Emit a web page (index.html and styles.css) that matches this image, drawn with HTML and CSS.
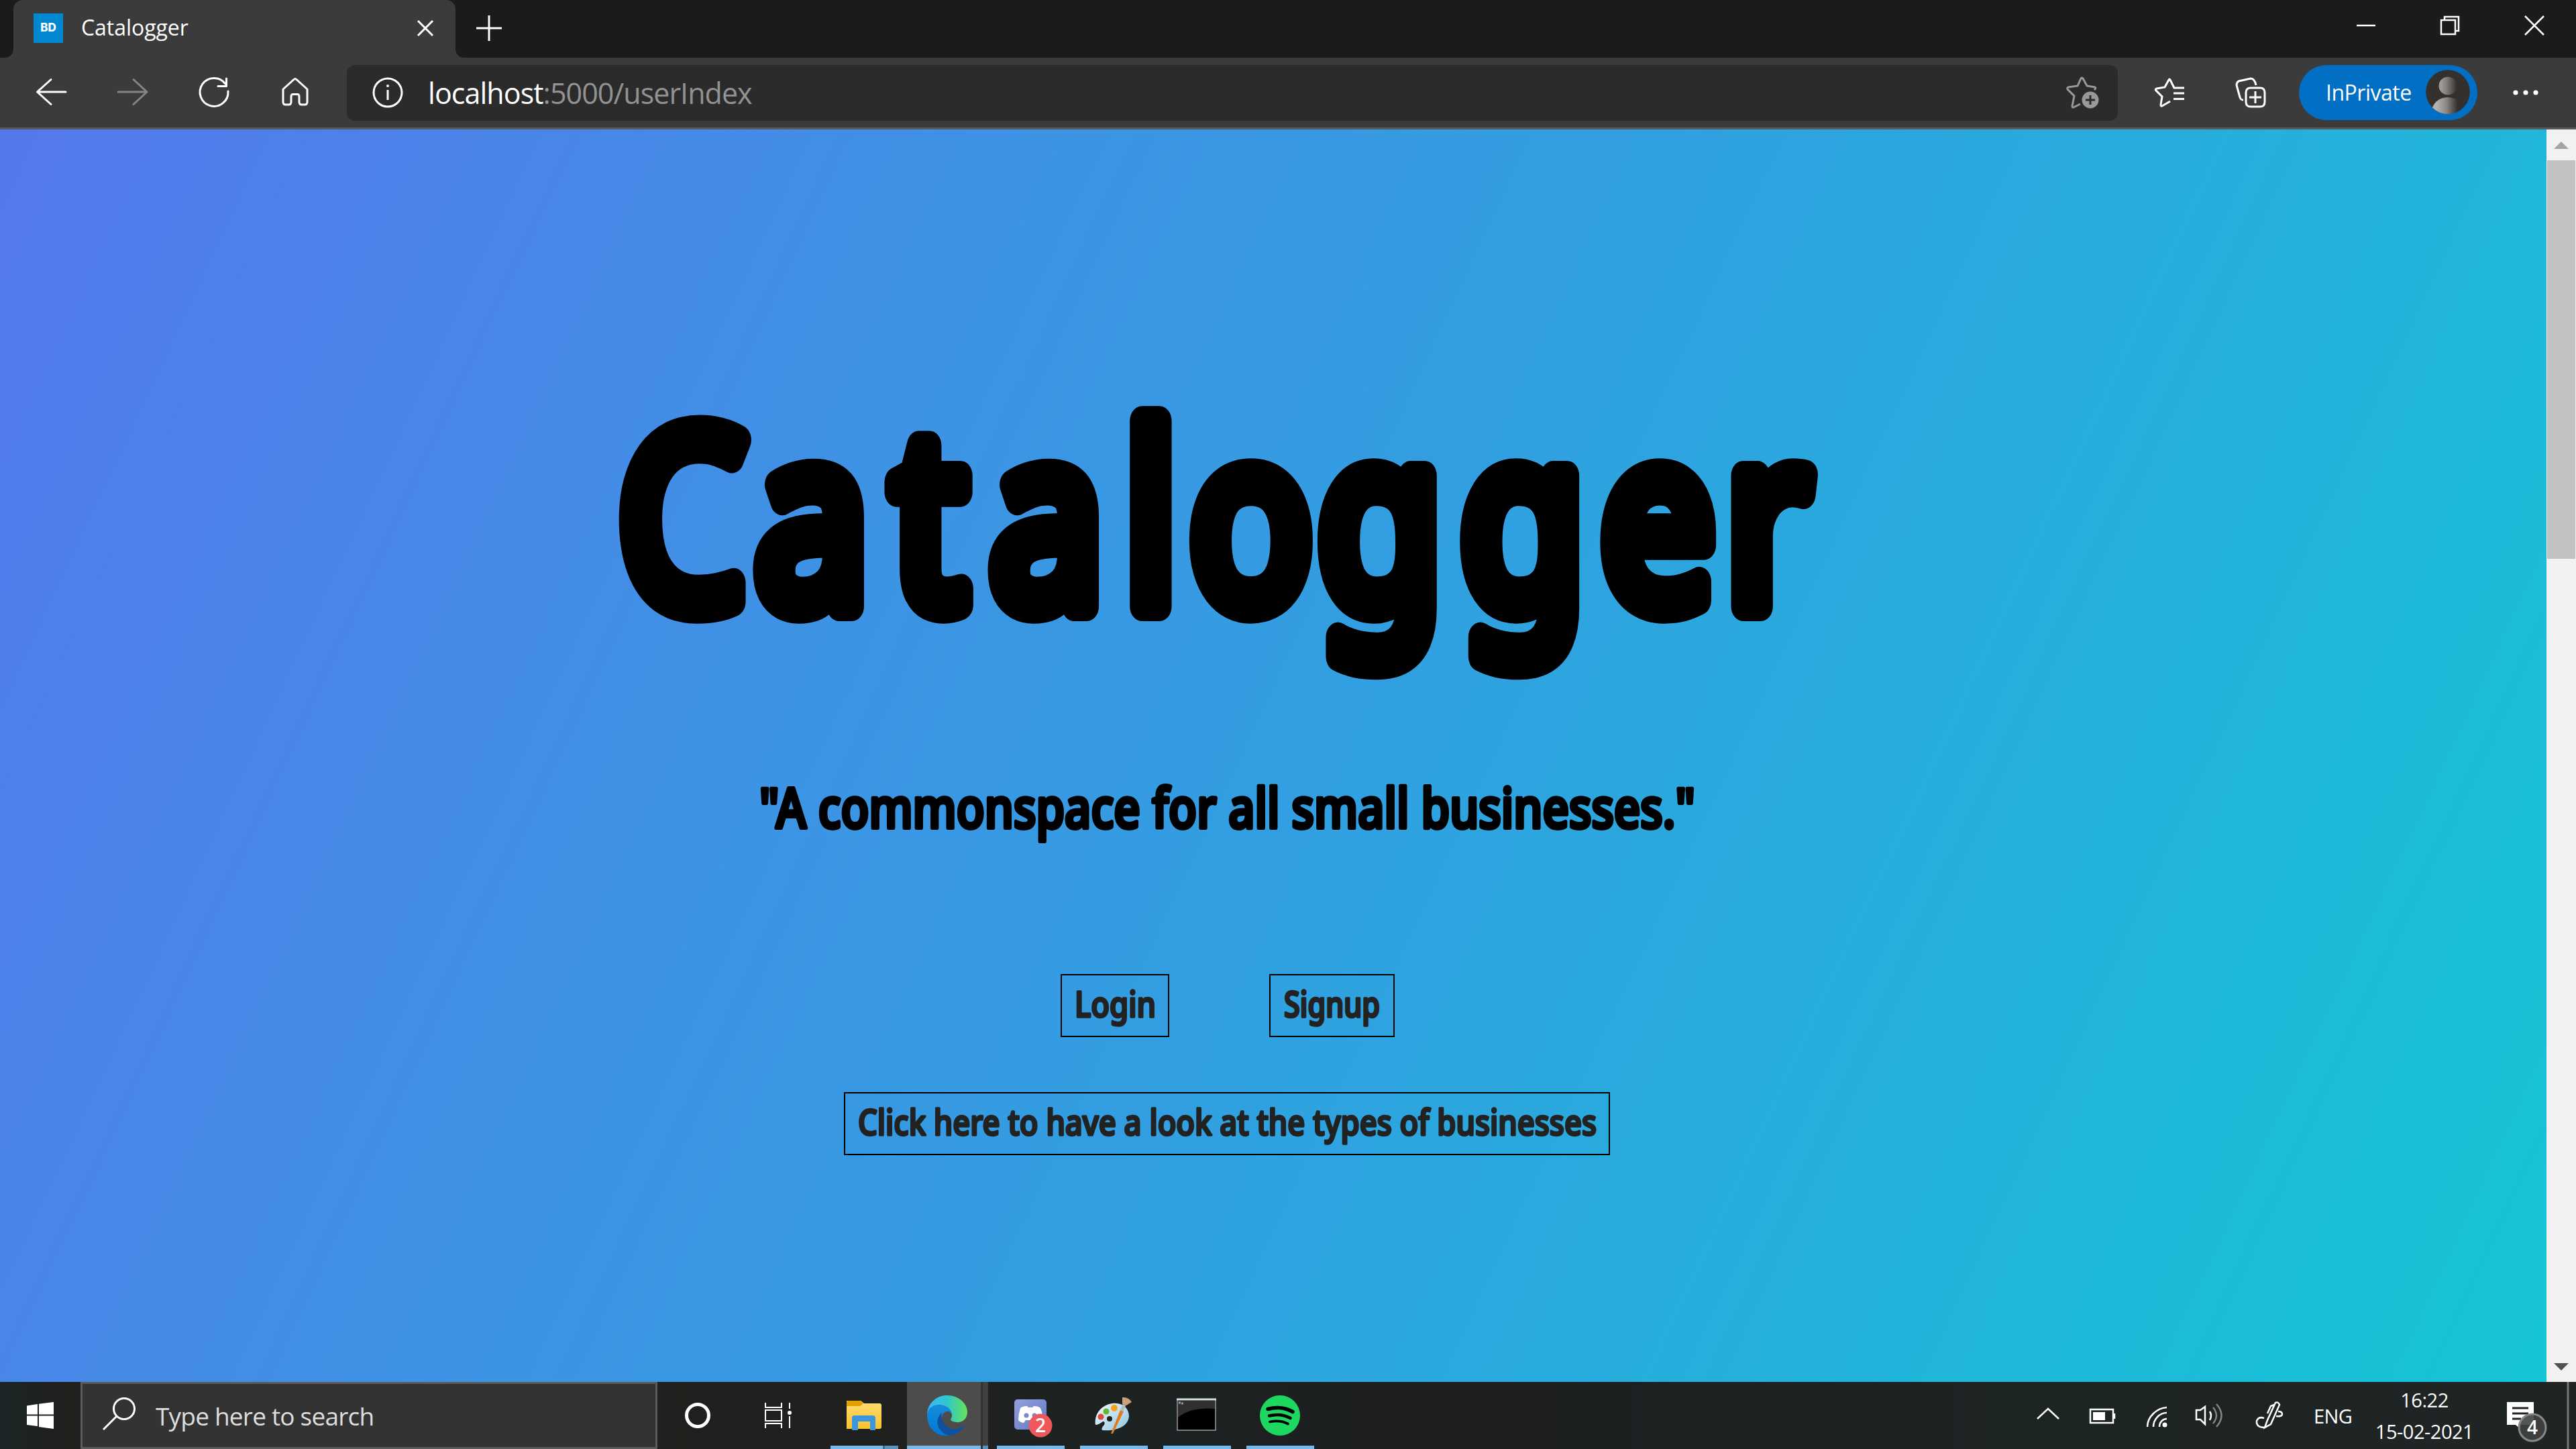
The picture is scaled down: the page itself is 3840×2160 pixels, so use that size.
FILE: index.html
```html
<!DOCTYPE html>
<html lang="en"><head><meta charset="utf-8"><title>Catalogger</title><link rel="stylesheet" href="styles.css"></head>
<body>
<div class="tabstrip">
  <div class="tab">
    <span class="favicon">BD</span>
    <span class="tabname">Catalogger</span>
    <svg class="tabclose" viewBox="0 0 24 24"><path d="M1 1 23 23M23 1 1 23"/></svg>
  </div>
  <svg class="newtab" viewBox="0 0 40 40"><path d="M20 1V39M1 20H39"/></svg>
  <svg class="winbtns" viewBox="0 0 280 28"><path d="M0 14H28M126 6h21v21h-21zM131 6V1h21v21h-5M251 0l28 28M279 0l-28 28"/></svg>
</div>
<div class="toolbar">
  <svg class="nav" viewBox="0 86 500 104">
    <path d="M98 137H56M76 118.500 55.500 137 76 155.500"/>
    <path class="dim" d="M176 137H218M199 118.500 219 137 199 155.500"/>
    <path d="M340 136A21 21 0 1 1 336 125M337.500 117V128.500H325"/>
    <path d="M422 133 438 118.500Q440 116.500 442 118.500L458 133V152Q458 156 454 156H450Q446 156 446 152V144Q446 140.500 443 140.500H437Q434 140.500 434 144V152Q434 156 430 156H426Q422 156 422 152Z"/>
  </svg>
  <div class="address">
    <svg class="info" viewBox="0 0 48 48"><circle cx="24" cy="24" r="21"/><path d="M24 20V35"/><circle class="dot" cx="24" cy="14" r="2"/></svg>
    <div class="url">localhost<span>:5000/userIndex</span></div>
    <svg class="addfav" viewBox="0 0 50 50"><path d="M21 42 11 47Q9 48 9 45L12 30 2 20Q1 18 3 17L17 15 22 4Q23 2 25 4L31 15 43 17Q45 18 42 21"/><circle cx="36" cy="36" r="12.500"/><path class="plus" d="M36 29V43M29 36H43"/></svg>
  </div>
  <svg class="tools" viewBox="3206 90 180 96">
    <path d="M3256 131H3241L3235 119Q3234 117 3233 119L3227 130 3215 132Q3212 133 3214 135L3223 144 3221 156Q3221 159 3223 158L3235 151M3240 139H3256M3240 147.500H3256"/>
    <path d="M3344 149Q3340 149 3339 145L3334 127Q3334 123 3337 121L3355 117Q3361 117 3363 127M3355 131H3369Q3376 131 3376 138V152Q3376 159 3369 159H3355Q3348 159 3348 152V138Q3348 131 3355 131M3362 136V154M3353 145H3371"/>
  </svg>
  <div class="profile"><span>InPrivate</span>
    <svg viewBox="0 0 66 66"><defs><linearGradient id="person"><stop offset=".15" stop-color="#b5b1ac"/><stop offset=".45" stop-color="#8c8884"/><stop offset=".8" stop-color="#33302d"/></linearGradient><linearGradient id="head"><stop offset=".1" stop-color="#a09c98"/><stop offset=".4" stop-color="#85817d"/><stop offset="1" stop-color="#33302d"/></linearGradient><clipPath id="round"><circle cx="33" cy="33" r="33"/></clipPath></defs><g clip-path="url(#round)"><circle cx="33" cy="33" r="33" fill="#33302d"/><circle cx="33" cy="24" r="13.500" fill="url(#head)"/><ellipse cx="33" cy="62" rx="24" ry="21" fill="url(#person)"/></g></svg>
  </div>
  <svg class="more" viewBox="0 0 40 10"><circle cx="5" cy="5" r="3.600"/><circle cx="20" cy="5" r="3.600"/><circle cx="35" cy="5" r="3.600"/></svg>
</div>
<div class="viewport">
  <main class="page">
    <h1><svg viewBox="900 560 1860 510"><g class="display title" transform="scale(.82 1)"><text y="904" font-size="364" stroke-width="44" x="1125 1374 1624 1801 2045 2164 2397 2656 2911 3138">Catalogger</text></g></svg></h1>
    <h2><svg viewBox="1100 1150 1460 120"><text class="display" x="1132" y="1234" font-size="81" stroke-width="6" textLength="1395" lengthAdjust="spacingAndGlyphs">"A commonspace for all small businesses."</text></svg></h2>
    <div class="actions">
      <a class="btn login"><svg viewBox="0 0 118 90"><text class="display" x="-1" y="62" font-size="53" stroke-width="3.500" textLength="121" lengthAdjust="spacingAndGlyphs">Login</text></svg></a>
      <a class="btn signup"><svg viewBox="0 0 143 90"><text class="display" x="0" y="62" font-size="53" stroke-width="3.500" textLength="143" lengthAdjust="spacingAndGlyphs">Signup</text></svg></a>
    </div>
    <a class="btn browse"><svg viewBox="0 0 1098 90"><text class="display" x="-1" y="62" font-size="53" stroke-width="3.500" textLength="1101" lengthAdjust="spacingAndGlyphs">Click here to have a look at the types of businesses</text></svg></a>
  </main>
  <div class="scrollbar"><i class="up"></i><div class="thumb"></div><i class="down"></i></div>
</div>
<footer class="taskbar">
  <svg class="start" viewBox="0 0 40 40"><path d="M0 5.500 16 3V18.500H0ZM18 2.700 40 0V18.500H18ZM0 20.500H16V36L0 34ZM18 20.500H40V40L18 37Z"/></svg>
  <div class="search"><svg viewBox="0 0 50 50"><circle cx="33" cy="17" r="15.500"/><path d="M22 28 2 48"/></svg><span>Type here to search</span></div>
  <svg class="apps" viewBox="1000 2060 1000 100">
    <defs>
      <linearGradient id="folder" x2="0" y2="1"><stop stop-color="#ffdc73"/><stop offset="1" stop-color="#fbc229"/></linearGradient>
      <linearGradient id="edgeTop"><stop stop-color="#3bb8ff"/><stop offset=".5" stop-color="#2fc7cb"/><stop offset="1" stop-color="#68e25a"/></linearGradient>
      <linearGradient id="edgeLeft" x2="0" y2="1"><stop stop-color="#168cd8"/><stop offset="1" stop-color="#0078d9"/></linearGradient>
      <linearGradient id="palette" x2="1" y2="1"><stop stop-color="#f2f8fb"/><stop offset="1" stop-color="#8fc5e0"/></linearGradient>
      <linearGradient id="discord" x2="1" y2="1"><stop stop-color="#93a1dc"/><stop offset="1" stop-color="#6277c4"/></linearGradient>
    </defs>
    <circle cx="1040" cy="2110" r="16.500" fill="none" stroke="#fff" stroke-width="5"/>
    <path d="M1141 2091V2098H1165V2091M1141 2129V2122H1165V2129M1141 2102H1165V2118H1141ZM1177 2091V2100M1177 2111V2129" fill="none" stroke="#fff" stroke-width="2"/><circle cx="1177" cy="2106" r="3"/>
    <path d="M1262 2088H1283L1288 2092H1311Q1314 2092 1314 2095V2127Q1314 2130 1311 2130H1262Z" fill="url(#folder)"/><path d="M1262 2090Q1262 2088 1265 2088H1282L1287 2092 1282 2096H1262Z" fill="#e2a000"/><path d="M1270 2132V2114Q1270 2110 1274 2110H1301Q1305 2110 1305 2114V2132H1297V2119H1279V2132Z" fill="#3a96dd"/>
    <rect x="1352" y="2060" width="110" height="95" fill="#4d4c4b"/><rect x="1462" y="2060" width="3" height="100" fill="#343332"/><rect x="1465" y="2060" width="8" height="95" fill="#414040"/>
    <g transform="translate(1382 2080)"><path d="M30 0C47 0 60 12 60 25C60 36 52 41 43 40C36 39 34 37 36 34C39 29 36 22 28 23C20 14 6 17 0 27C2 10 15 0 30 0Z" fill="url(#edgeTop)"/><path d="M0 30C0 20 8 14 18 14C29 14 37 21 37 29C35 23 29 22 24 27C19 38 23 52 34 60C13 63 0 47 0 30Z" fill="url(#edgeLeft)"/><path d="M22 26C19 40 32 52 44 50C48 49 51 47 54 45Q56 44 55 46C50 55 42 60 32 60C12 53 12 34 22 26Z" fill="#0f519f"/></g>
    <rect x="1512" y="2086" width="48" height="45" rx="5" fill="url(#discord)"/><path d="M1521 2099Q1525 2096 1531 2096L1533 2098H1539L1541 2096Q1548 2096 1551 2099Q1555 2109 1555 2118Q1551 2121 1546 2121L1543 2117H1529L1526 2121Q1520 2120 1518 2117Q1518 2108 1521 2099Z" fill="#fff"/><circle cx="1530" cy="2110" r="3.500" fill="#7788d0"/><circle cx="1542" cy="2110" r="3.500" fill="#7788d0"/><circle cx="1551" cy="2125" r="17.500" fill="#f0575b"/><text x="1551" y="2135" font-size="28" text-anchor="middle">2</text>
    <path d="M1633 2124C1631 2109 1640 2095 1658 2092C1673 2090 1683 2099 1683 2111C1682 2126 1665 2134 1643 2132Q1641 2129 1646 2124Q1648 2119 1644 2119Q1638 2124 1633 2124Z" fill="url(#palette)"/><circle cx="1654" cy="2115" r="4" fill="#222"/><circle cx="1641" cy="2112" r="4.500" fill="#e44838"/><circle cx="1649" cy="2104" r="4.500" fill="#65b52d"/><circle cx="1661" cy="2099" r="5" fill="#f7a11a"/><path d="M1656 2137 1670 2102 1675 2104 1659 2137Z" fill="#e07b20"/><path d="M1672 2103 1676 2094" stroke="#aebdc6" stroke-width="5"/><path d="M1673 2093V2083Q1682 2082 1687 2090L1679 2095Z" fill="#cba078"/>
    <path d="M1755 2086H1812V2132H1755Z" fill="#000" stroke="#999ca1" stroke-width="1.500"/><path d="M1756 2088H1811V2100Q1775 2097 1756 2113Z" fill="#303030"/><path d="M1754 2086H1813" stroke="#dedfe3" stroke-width="3"/><path d="M1757 2091H1760M1761 2092H1764" stroke="#999"/>
    <circle cx="1908" cy="2110" r="30" fill="#1ed760"/><path d="M1890 2100.500Q1910 2095 1927 2104.500" fill="none" stroke="#000" stroke-width="5.500" stroke-linecap="round"/><path d="M1892 2110.500Q1909 2106 1923.500 2114" fill="none" stroke="#000" stroke-width="4.500" stroke-linecap="round"/><path d="M1893 2119.500Q1908 2116 1920 2122.500" fill="none" stroke="#000" stroke-width="3.700" stroke-linecap="round"/>
    <path d="M1238 2155H1316V2160H1238ZM1352 2155H1462V2160H1352ZM1486 2155H1587V2160H1486ZM1610 2155H1711V2160H1610ZM1734 2155H1835V2160H1734ZM1858 2155H1959V2160H1858Z" fill="#76b9ed"/><path d="M1319 2155H1339V2160H1319ZM1465 2155H1473V2160H1465Z" fill="#5c91bb"/><path d="M1316 2155H1319V2160H1316Z" fill="#456d8d"/>
  </svg>
  <svg class="tray" viewBox="3020 2060 380 100">
    <path d="M3037 2115 3053 2100 3069 2115M3116 2101H3150V2121H3116ZM3152 2107V2115"/><path class="solid" d="M3120 2105H3138V2117H3120Z"/>
    <path d="M3201 2127C3201 2112 3215 2099 3230 2098M3210 2127C3210 2116 3219 2106 3230 2106M3219 2127C3219 2120 3224 2115 3230 2115"/><circle class="solid" cx="3227" cy="2124" r="3.500"/>
    <path d="M3274 2102H3280L3287 2097V2123L3280 2116H3274ZM3294 2104Q3298 2110 3294 2117"/><path class="dim" d="M3299 2098Q3309 2110 3299 2122M3304 2093Q3319 2110 3304 2127"/>
    <path d="M3376 2128 3380 2117 3392 2091Q3396 2089 3398 2094L3385 2123ZM3380 2107 3385 2096 3390 2094M3376 2128Q3363 2128 3364 2118Q3367 2111 3375 2114M3393 2111Q3402 2112 3402 2108Q3402 2104 3396 2104"/>
  </svg>
  <span class="lang">ENG</span>
  <div class="clock"><span>16:22</span><span>15-02-2021</span></div>
  <svg class="notice" viewBox="3730 2060 110 100"><path class="solid" d="M3737 2090H3777V2124H3757V2130L3750 2124H3737Z"/><path d="M3745 2099H3769M3745 2107H3769M3745 2115H3758" stroke="#222"/><circle cx="3775" cy="2128" r="20" fill="#404343" fill-opacity=".9" stroke="#888"/><text x="3775" y="2138" font-size="28" text-anchor="middle">4</text><path d="M3828 2060V2160" stroke="#777"/></svg>
</footer>
</body></html>
```
FILE: styles.css
```css
*{box-sizing:border-box}
body{margin:0;width:3840px;height:2160px;overflow:hidden;display:flex;flex-direction:column;font-family:"Open Sans","Noto Sans",sans-serif;color:#fff;background:#1b1b1b}
svg{display:block;fill:none;stroke:#fff;stroke-width:3;flex:none;overflow:visible}
.tabstrip{height:86px;display:flex;align-items:flex-start;background:#1b1b1b;padding-left:20px}
.tab{position:relative;width:659px;height:86px;border-radius:14px 14px 0 0;background:#3b3b3b;display:flex;align-items:center;padding:0 33px 2px 30px}
.tab::before,.tab::after{content:"";position:absolute;bottom:0;width:12px;height:12px}
.tab::before{left:-12px;background:radial-gradient(circle at 0 0,transparent 11.5px,#3b3b3b 12px)}
.tab::after{right:-12px;background:radial-gradient(circle at 100% 0,transparent 11.5px,#3b3b3b 12px)}
.favicon{width:44px;height:44px;background:#0288d1;font:800 17px/42px Inter,sans-serif;text-align:center}
.tabname{font-size:32px;line-height:40px;letter-spacing:-.05px;margin:-2px 0 0 27px;flex:1}
.tabclose{width:24px;height:24px}
.newtab{width:40px;height:40px;margin:22px 0 0 30px}
.winbtns{width:280px;height:28px;margin:24px 47px 0 auto;stroke-width:2.5}
.toolbar{height:107px;background:#3b3b3b;border-bottom:3px solid #5b5b5b;display:flex;align-items:center;padding-right:55px}
.nav{width:500px;height:104px;stroke-linecap:round;stroke-linejoin:round}
.dim{stroke:#858585}
.address{width:2640px;height:83px;border-radius:12px;background:#2b2b2b;margin-left:17px;display:flex;align-items:center;padding:0 28px 0 37px}
.info{width:48px;height:48px}
.info .dot{fill:#fff;stroke:none}
.url{font-size:43px;letter-spacing:-.95px;margin-left:36px;flex:1}
.url span{color:#929292}
.addfav{width:50px;height:50px;stroke:#999;margin-right:-1px}
.addfav circle{fill:#999;stroke:none}
.addfav .plus{stroke:#2b2b2b}
.tools{width:180px;height:96px;margin-left:49px}
.profile{width:266px;height:82px;margin-left:41px;border-radius:41px;background:#006fc4;display:flex;align-items:center;justify-content:space-between;padding:0 11px 2px 40px;font-size:32px;letter-spacing:-.5px}
.profile svg{width:66px;height:66px;stroke:none}
.more{width:40px;height:10px;margin-left:auto;fill:#fff;stroke:none}
.viewport{height:1867px;display:flex}
.page{width:3796px;background:linear-gradient(115deg,#5578ed 0%,#3f91e5 31%,#319fe1 52%,#21b5da 80%,#15c5d5 100%);display:flex;flex-direction:column;align-items:flex-start}
.page h1,.page h2{margin:0}
.page h1{margin:367px 0 0 900px}
.page h1 svg{width:1860px;height:510px}
.page h2{margin:80px 0 0 1100px}
.page h2 svg{width:1460px;height:120px}
.display{font-family:"Noto Sans",sans-serif;font-weight:500;fill:#000;stroke:#000;stroke-linejoin:round}
.title{font-weight:400}
.actions{display:flex;gap:149px;margin:182px 0 0 1581px}
.btn{height:94px;border:2px solid #000;display:block;padding:0 20px}
.btn svg{height:90px}
.btn .display{fill:#222;stroke:#222}
.login{width:162px}.login svg{width:118px}
.signup{width:187px}.signup svg{width:143px}
.browse{width:1142px;margin:82px 0 0 1258px}.browse svg{width:1098px}
.scrollbar{width:44px;background:#f1f1f1;display:flex;flex-direction:column;align-items:center;padding:18px 0 17px}
.up,.down{width:0;height:0;border:11px solid transparent;border-top:0;border-bottom:11px solid #a3a3a3}
.down{margin-top:auto;border-bottom:0;border-top:11px solid #505050}
.thumb{width:42px;height:594px;background:#c1c1c1;margin-top:17px}
.taskbar{height:100px;background:linear-gradient(90deg,#1b2525,#211f1c 3%,#20201e 32%,#1c2222 45%,#1d1e20 55%,#1d2424 80%,#202424);display:flex;align-items:center}
.start{width:40px;height:40px;margin-left:40px;fill:#fff;stroke:none}
.search{width:860px;height:100px;border:3px solid #5b5b5b;background:#333;margin-left:40px;display:flex;align-items:center;padding-left:29px;font-size:37px;color:#ddd}
.search svg{width:50px;height:50px;margin-top:-4px;stroke:#fff}.search span{margin-left:30px;letter-spacing:-.8px}
.apps{width:1000px;height:100px;margin-left:20px;fill:#fff;stroke:none}
.tray{width:380px;height:100px;margin-left:1020px;stroke-width:2.5}
.solid{fill:#fff;stroke:none}
.lang{font-size:29px;margin-left:49px;width:80px;letter-spacing:-.6px}
.clock{width:150px;margin-left:10px;display:flex;flex-direction:column;align-items:center;font-size:29px;line-height:47px;letter-spacing:-.5px}
.notice{width:110px;height:100px;margin-left:auto}
.notice text,.apps text{fill:#fff;stroke:none;font-weight:600}
```
